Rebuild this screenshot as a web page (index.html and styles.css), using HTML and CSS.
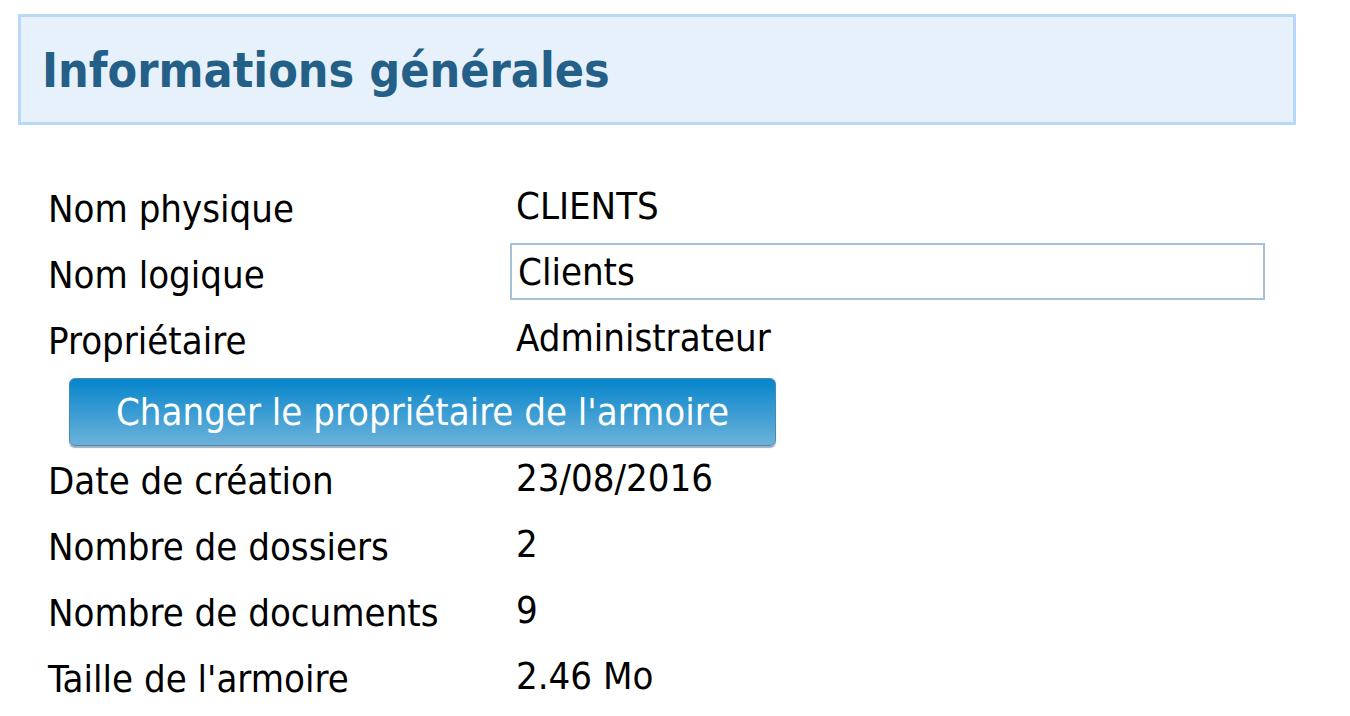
FILE: index.html
```html
<!DOCTYPE html>
<html lang="fr">

<head>
    <meta charset="utf-8">
    <meta name="viewport" content="width=device-width, initial-scale=1.0">
    <title>Informations générales</title>
    <link rel="stylesheet" href="styles.css">
</head>

<body>
    <header class="entete">
        <h1>Informations générales</h1>
    </header>

    <main class="infos">
        <div class="ligne">
            <span class="label">Nom physique</span>
            <span class="valeur">CLIENTS</span>
        </div>
        <div class="ligne">
            <span class="label">Nom logique</span>
            <input class="champ" type="text" value="Clients">
        </div>
        <div class="ligne">
            <span class="label">Propriétaire</span>
            <span class="valeur">Administrateur</span>
        </div>
        <div class="ligne-bouton">
            <button class="bouton">Changer le propriétaire de l'armoire</button>
        </div>
        <div class="ligne">
            <span class="label">Date de création</span>
            <span class="valeur">23/08/2016</span>
        </div>
        <div class="ligne">
            <span class="label">Nombre de dossiers</span>
            <span class="valeur">2</span>
        </div>
        <div class="ligne">
            <span class="label">Nombre de documents</span>
            <span class="valeur">9</span>
        </div>
        <div class="ligne">
            <span class="label">Taille de l'armoire</span>
            <span class="valeur">2.46 Mo</span>
        </div>
    </main>
</body>

</html>
```
FILE: styles.css
```css
*,
body * {
    box-sizing: border-box;
}

body {
    margin: 0;
    padding: 0;
    font-family: "DejaVu Sans Condensed", "DejaVu Sans", sans-serif;
    font-size: 38px;
    color: #000;
    background: #fff;
}

.entete {
    margin: 14px 54px 0 18px;
    height: 111px;
    background-color: #e7f1fb;
    border: 3px solid #b9d8f7;
    display: flex;
    align-items: center;
    padding-left: 21px;
}

h1 {
    margin: 0;
    font-size: 48px;
    font-weight: bold;
    color: #245f87;
}

.infos {
    padding: 51px 0 0 48px;
}

.ligne {
    display: grid;
    grid-template-columns: 468px 755px;
    height: 66px;
    align-items: start;
}

.label {
    line-height: 66px;
}

.valeur {
    line-height: 60px;
}

.champ {
    margin: 1px 0 0 -6px;
    width: 755px;
    height: 57px;
    border: 2px solid #a9c1d8;
    padding: 0 6px;
    font-family: inherit;
    font-size: 38px;
    color: #000;
    background: #fff;
}

.ligne-bouton {
    height: 74px;
    padding: 4px 0 0 21px;
}

.bouton {
    width: 707px;
    height: 68px;
    border: 1px solid #4d87ad;
    border-radius: 6px;
    background: linear-gradient(to bottom, #0685cb, #6cb2da);
    color: #fff;
    font-family: inherit;
    font-size: 38px;
    padding: 0;
    box-shadow: 0 2px 1px rgba(40, 80, 110, 0.45);
}
```
